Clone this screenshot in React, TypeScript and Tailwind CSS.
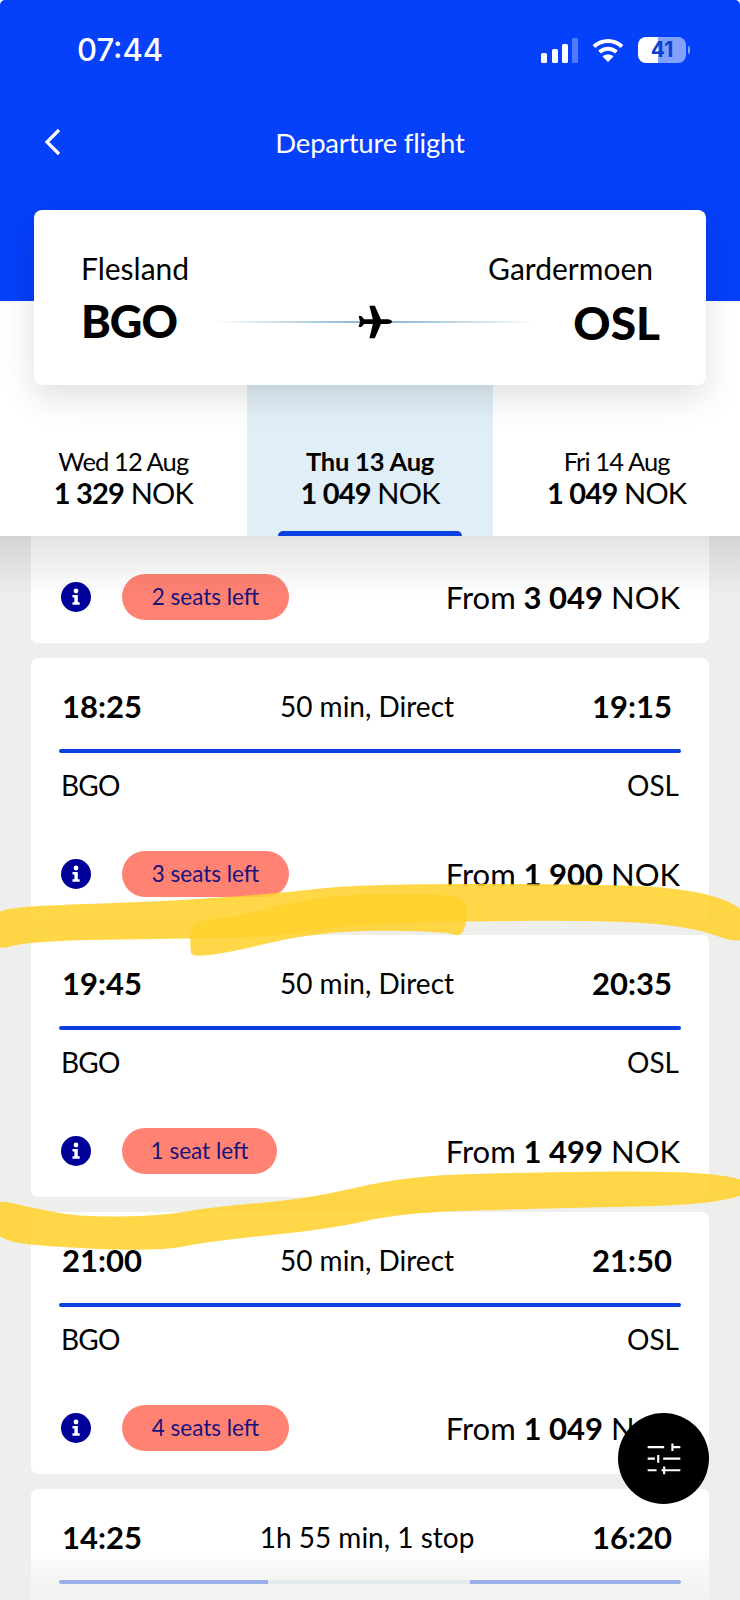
import React from "react";

type Pt = [number, number];

function smooth(pts: Pt[]): string {
  const n = pts.length;
  const mid = (a: Pt, b: Pt): Pt => [(a[0] + b[0]) / 2, (a[1] + b[1]) / 2];
  const start = mid(pts[n - 1], pts[0]);
  let d = `M${start[0]} ${start[1]}`;
  for (let i = 0; i < n; i++) {
    const m = mid(pts[i], pts[(i + 1) % n]);
    d += ` Q${pts[i][0]} ${pts[i][1]} ${m[0]} ${m[1]}`;
  }
  return d + "Z";
}

const stroke1: Pt[] = [
  [-10, 914], [19, 906], [156, 902], [283, 893], [359, 884], [566, 884], [684, 887], [750, 908],
  [750, 948], [684, 924], [566, 920], [359, 923], [283, 937], [156, 939], [30, 941], [-10, 952],
];
const stroke2: Pt[] = [
  [191, 922], [236, 917], [302, 900], [354, 894], [453, 894], [468, 903], [466, 927], [459, 937],
  [448, 932], [359, 930], [293, 937], [241, 950], [192, 958], [190, 947],
];
const stroke3: Pt[] = [
  [-10, 1198], [28, 1207], [80, 1217], [160, 1216], [212, 1207], [307, 1199], [392, 1179], [472, 1173],
  [750, 1170], [750, 1204], [519, 1209], [401, 1213], [330, 1229], [212, 1241], [160, 1251], [70, 1248], [-10, 1241],
];

function InfoIcon() {
  return (
    <svg width="30" height="30" viewBox="0 0 30 30" className="shrink-0">
      <circle cx="15" cy="15" r="15" fill="#000099" />
      <circle cx="15" cy="9" r="2.4" fill="#fff" />
      <path d="M11.5 13h5.3v7.2h1.9v2.6h-7.2v-2.6h1.9v-4.6h-1.9z" fill="#fff" />
    </svg>
  );
}

function BottomRow({ seats, amount, wide = true }: { seats: string; amount: string; wide?: boolean }) {
  return (
    <div className="flex items-center pl-[30px] pr-[29px]">
      <InfoIcon />
      <div
        className={`ml-[31px] h-[46px] rounded-full bg-[#ff8273] flex items-center justify-center text-[22.5px] text-[#16127c] ${
          wide ? "w-[167px]" : "w-[155px]"
        }`}
      >
        {seats}
      </div>
      <div className="ml-auto text-[31px] leading-[36px] text-black whitespace-nowrap">
        From <span className="font-bold">{amount}</span> NOK
      </div>
    </div>
  );
}

function TimeRow({ from, mid, to }: { from: string; mid: string; to: string }) {
  return (
    <div className="flex justify-between items-center h-[34px] pl-[31px] pr-[37px] text-black">
      <span className="text-[31px] font-bold">{from}</span>
      <span className="text-[28px]">{mid}</span>
      <span className="text-[31px] font-bold">{to}</span>
    </div>
  );
}

function FlightCard({ from, to, seats, amount, wide }: { from: string; to: string; seats: string; amount: string; wide?: boolean }) {
  return (
    <div className="shrink-0 h-[262px] rounded-[7px] bg-white pt-[31px]">
      <TimeRow from={from} mid="50 min, Direct" to={to} />
      <div className="mt-[26px] mx-[28px] h-[4px] rounded-full bg-[#0b3fe0]" />
      <div className="mt-[15px] h-[34px] flex justify-between items-center pl-[30px] pr-[30px] text-[28px] text-black">
        <span className="tracking-[-0.8px]">BGO</span>
        <span>OSL</span>
      </div>
      <div className="mt-[49px]">
        <BottomRow seats={seats} amount={amount} wide={wide} />
      </div>
    </div>
  );
}

function DateTab({ day, amount, active }: { day: string; amount: string; active?: boolean }) {
  return (
    <div className={`relative flex flex-col items-center justify-end pb-[28px] ${active ? "bg-[#e0eef7]" : "bg-white"}`}>
      <div className={`text-[25.5px] leading-[31px] text-black ${active ? "font-bold tracking-[-0.2px]" : "tracking-[-0.9px]"}`}>{day}</div>
      <div className="text-[29px] leading-[31px] tracking-[-0.8px] text-black whitespace-nowrap">
        <span className="font-bold">{amount}</span> NOK
      </div>
      {active && <div className="absolute bottom-0 left-[31px] right-[31px] h-[5px] rounded-t-[5px] bg-[#0b3fe0]" />}
    </div>
  );
}

export default function App() {
  return (
    <div
      className="relative w-[740px] h-[1600px] overflow-hidden bg-white flex flex-col"
      style={{ fontFamily: 'Lato, "Noto Sans", sans-serif' }}
    >
      <header className="shrink-0 h-[301px] rounded-t-[5px] bg-[#0540fb] text-white pt-[25px]">
        <div className="flex items-center justify-between h-[50px] pl-[77px] pr-[50px]">
          <span className="text-[31px] font-medium" style={{ fontFamily: "Inter, sans-serif" }}>07:44</span>
          <div className="flex items-center">
            <svg width="38" height="25" viewBox="0 0 38 25" fill="#fff">
              <rect x="0" y="15" width="6" height="10" rx="1.5" />
              <rect x="11" y="11" width="6" height="14" rx="1.5" />
              <rect x="21" y="6" width="6" height="19" rx="1.5" />
              <rect x="31" y="0" width="6" height="25" rx="1.5" opacity="0.3" />
            </svg>
            <svg width="32" height="26" viewBox="0 0 32 26" fill="none" stroke="#fff" strokeWidth="4" className="ml-[13px]">
              <path d="M2 9.5C10 2 22 2 30 9.5" />
              <path d="M7.5 15C12.5 10.5 19.5 10.5 24.5 15" />
              <path d="M16 25l-5.5-5.6c3-2.6 8-2.6 11 0z" fill="#fff" stroke="none" />
            </svg>
            <div className="ml-[14px] flex items-center">
              <div className="w-[48px] h-[26px] rounded-[8px] bg-[linear-gradient(90deg,#fff_42%,rgba(255,255,255,0.5)_42%)] flex items-center justify-center text-[#0b3fd0] text-[21px] font-bold" style={{ fontFamily: "Inter, sans-serif" }}>
                41
              </div>
              <div className="ml-[2px] w-[2px] h-[8px] rounded-r-full bg-white/50" />
            </div>
          </div>
        </div>
        <div className="relative flex items-center justify-center h-[40px] mt-[48px] text-[27.5px] tracking-[-0.2px]">
          <svg width="18" height="28" viewBox="0 0 18 28" fill="none" stroke="#fff" strokeWidth="3.2" className="absolute left-[44px] top-[5px]">
            <path d="M15 2L3 14l12 12" />
          </svg>
          <span>Departure flight</span>
        </div>
      </header>

      <section className="relative z-20 shrink-0 mx-[34px] -mt-[91px] h-[175px] rounded-[8px] bg-white shadow-[0_12px_34px_rgba(0,0,0,0.13)] pt-[39px] pl-[47px] pr-[53px] text-black">
        <div className="flex justify-between text-[30px] leading-[38px]">
          <span>Flesland</span>
          <span>Gardermoen</span>
        </div>
        <div className="flex items-center justify-between mt-[12px] h-[46px]">
          <span className="text-[45px] font-black tracking-[-1px]">BGO</span>
          <div className="relative flex-1 flex items-center justify-center">
            <div className="absolute left-[35px] right-[35px] h-[2px] bg-[linear-gradient(90deg,transparent,#7fb0cf_50%,transparent)]" />
            <svg width="35" height="34" viewBox="50 28 104 100" className="relative" fill="#000">
              <path d="M152 77Q150 71 140 70L118 70L100 30L84 30L94 70L68 70L60 60L52 60L56 77L52 93L60 93L68 84L94 84L84 126L100 126L118 84L140 84Q150 83 152 77Z" />
            </svg>
          </div>
          <span className="text-[46px] font-black -mr-[7px]">OSL</span>
        </div>
      </section>

      <nav className="relative z-10 shrink-0 h-[151px] grid grid-cols-3">
        <DateTab day="Wed 12 Aug" amount="1 329" />
        <DateTab day="Thu 13 Aug" amount="1 049" active />
        <DateTab day="Fri 14 Aug" amount="1 049" />
      </nav>

      <main className="relative flex-1 overflow-hidden bg-[#eeefec] flex flex-col gap-[15px] px-[31px]">
        <div className="shrink-0 rounded-b-[7px] bg-white pt-[38px] pb-[23px]">
          <BottomRow seats="2 seats left" amount="3 049" />
        </div>
        <FlightCard from="18:25" to="19:15" seats="3 seats left" amount="1 900" />
        <FlightCard from="19:45" to="20:35" seats="1 seat left" amount="1 499" wide={false} />
        <FlightCard from="21:00" to="21:50" seats="4 seats left" amount="1 049" />
        <div className="shrink-0 h-[262px] rounded-[7px] bg-white pt-[31px]">
          <TimeRow from="14:25" mid="1h 55 min, 1 stop" to="16:20" />
          <div className="mt-[26px] mx-[28px] h-[4px] flex">
            <div className="w-[209px] rounded-l-full bg-[#0b3fe0]" />
            <div className="w-[202px] bg-[#d4e4ee]" />
            <div className="flex-1 rounded-r-full bg-[#0b3fe0]" />
          </div>
        </div>
        <div className="absolute top-0 left-0 right-0 h-[62px] bg-[linear-gradient(180deg,rgba(0,0,0,0.11),rgba(0,0,0,0))]" />
        <div className="absolute bottom-0 left-0 right-0 h-[50px] bg-[linear-gradient(180deg,rgba(238,239,236,0),rgba(238,239,236,0.62)_60%,rgba(238,239,236,0.75))]" />
      </main>

      <svg className="absolute inset-0 z-30 pointer-events-none" width="740" height="1600" viewBox="0 0 740 1600">
        <path d={smooth(stroke1)} fill="#ffd12e" fillOpacity="0.88" />
        <path d={smooth(stroke2)} fill="#ffd12e" fillOpacity="0.88" />
        <path d={smooth(stroke3)} fill="#ffd12e" fillOpacity="0.88" />
      </svg>

      <button className="absolute z-40 left-[618px] top-[1413px] w-[91px] h-[91px] rounded-full bg-black flex items-center justify-center">
        <svg width="38" height="35" viewBox="105 110 115 105" fill="none" stroke="#fff" strokeWidth="6.5">
          <path d="M113 128H163M188 128H212M188 117V140" />
          <path d="M113 163H135M160 163H212M145 152V175" />
          <path d="M113 198H140M155 198H212M163 187V210" />
        </svg>
      </button>
    </div>
  );
}
